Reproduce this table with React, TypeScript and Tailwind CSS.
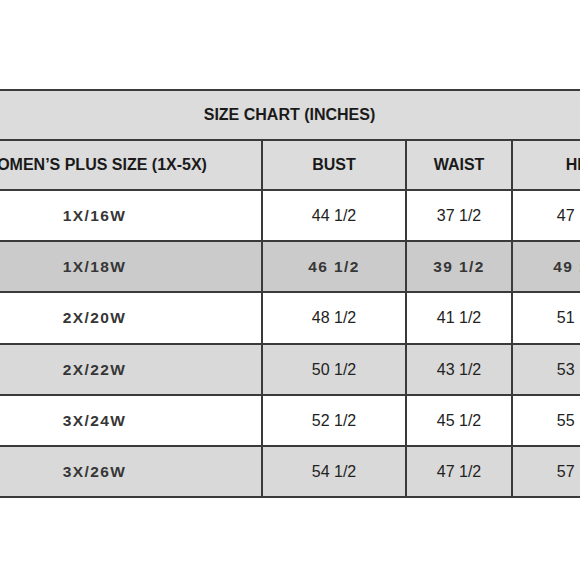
const ROWS = [
  { size: '1X/16W', bust: '44 1/2', waist: '37 1/2', hip: '47 1/2', shade: 'white', h: 'h-[49px]' },
  { size: '1X/18W', bust: '46 1/2', waist: '39 1/2', hip: '49 1/2', shade: 'dark', h: 'h-[49px]' },
  { size: '2X/20W', bust: '48 1/2', waist: '41 1/2', hip: '51 1/2', shade: 'white', h: 'h-[50px]' },
  { size: '2X/22W', bust: '50 1/2', waist: '43 1/2', hip: '53 1/2', shade: 'gray', h: 'h-[49px]' },
  { size: '3X/24W', bust: '52 1/2', waist: '45 1/2', hip: '55 1/2', shade: 'white', h: 'h-[49px]' },
  { size: '3X/26W', bust: '54 1/2', waist: '47 1/2', hip: '57 1/2', shade: 'gray', h: 'h-[49px]' },
];

const SHADES: Record<string, string> = {
  white: 'bg-white',
  gray: 'bg-[#d9d9d9]',
  dark: 'bg-[#cbcbcb]',
};

const cell = 'flex items-center justify-center';
const label = 'text-[15.5px] font-bold tracking-[1.4px] text-[#363636]';
const value = 'text-[16px] text-[#222]';

const App = () => {
  return (
    <div className="h-[580px] w-[580px] overflow-hidden bg-white pt-[89px] font-['Liberation_Sans',Arial,sans-serif]">
      <div className="ml-[-74px] grid w-[723px] grid-cols-[333px_142px_104px_132px] gap-[2px] bg-[#3a3a3a] p-[2px]">
        {/* title */}
        <div className="col-span-4 flex h-[48px] items-center justify-center bg-[#dcdcdc] pl-[6px] text-[16px] font-bold text-[#1a1a1a]">
          SIZE CHART (INCHES)
        </div>

        {/* column headers */}
        {['WOMEN’S PLUS SIZE (1X-5X)', 'BUST', 'WAIST', 'HIP'].map((h) => (
          <div
            key={h}
            className="flex h-[48px] items-center justify-center bg-[#dcdcdc] text-[16px] font-bold text-[#1a1a1a]"
          >
            {h}
          </div>
        ))}

        {/* rows */}
        {ROWS.map((r) => {
          const bg = SHADES[r.shade];
          const text = r.shade === 'dark' ? label : value;
          return [
            <div key={r.size + 's'} className={`${cell} ${r.h} ${bg} ${label}`}>
              {r.size}
            </div>,
            <div key={r.size + 'b'} className={`${cell} ${r.h} ${bg} ${text}`}>
              {r.bust}
            </div>,
            <div key={r.size + 'w'} className={`${cell} ${r.h} ${bg} ${text}`}>
              {r.waist}
            </div>,
            <div key={r.size + 'h'} className={`${cell} ${r.h} ${bg} ${text}`}>
              {r.hip}
            </div>,
          ];
        })}
      </div>
    </div>
  );
};

export default App;
